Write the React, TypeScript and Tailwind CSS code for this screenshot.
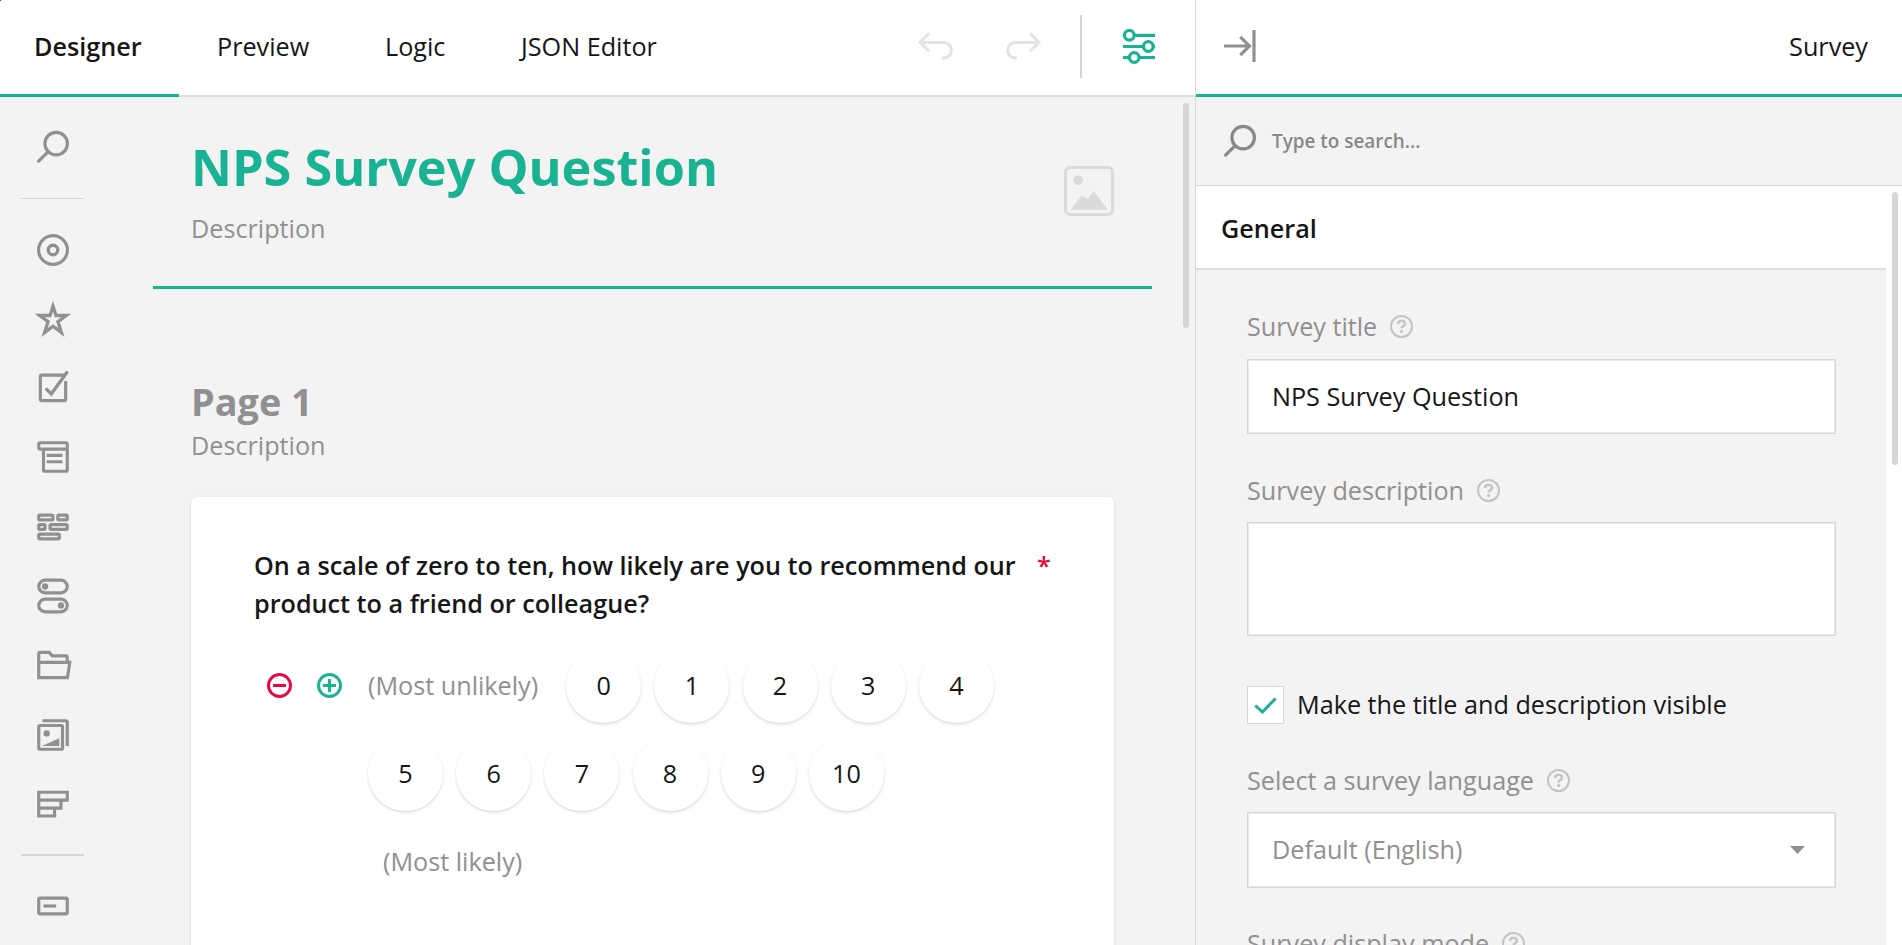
import React from "react";

type IconProps = { className?: string; children: React.ReactNode; box?: string };

function Icon({ className = "", box = "0 0 24 24", children }: IconProps) {
  return (
    <svg viewBox={box} className={"block shrink-0 " + className} fill="none" stroke="currentColor" strokeWidth={2}>
      {children}
    </svg>
  );
}

const searchShape = (
  <>
    <circle cx="14" cy="9.9" r="7.1" strokeWidth={2} />
    <path d="M8.8 15.1L2.9 20.9" strokeLinecap="round" strokeWidth={2} />
  </>
);

const toolbox: { name: string; shape: React.ReactNode; gap: string }[] = [
  {
    name: "radiogroup",
    gap: "mt-[32px]",
    shape: (
      <>
        <circle cx="12" cy="12" r="9.1" />
        <circle cx="12" cy="12" r="3" strokeWidth={2.1} />
      </>
    ),
  },
  {
    name: "rating",
    gap: "mt-[31px]",
    shape: <path d="M12 3.9L13.9 9.8H20.4L15.1 13.6L17.3 20.6L12 16.6L6.7 20.6L8.9 13.6L3.6 9.8H10.1Z" strokeWidth={2.1} strokeMiterlimit={10} />,
  },
  {
    name: "checkbox",
    gap: "mt-[31px]",
    shape: (
      <>
        <path d="M19 3.9H5C4.4 3.9 4 4.3 4 4.9V19C4 19.6 4.4 20 5 20H19C19.6 20 20 19.6 20 19V7.6" />
        <path d="M7.4 12.2L10.9 15.7L21.2 1.6" strokeWidth={2.1} />
      </>
    ),
  },
  {
    name: "dropdown",
    gap: "mt-[31px]",
    shape: (
      <>
        <path d="M4 3H20C20.6 3 21 3.4 21 4V20C21 20.6 20.6 21 20 21H7C6.4 21 6 20.6 6 20V7H4C3.4 7 3 6.6 3 6.2V4C3 3.4 3.4 3 4 3ZM6 7H21" />
        <path d="M8 11H18M8 15H18" />
      </>
    ),
  },
  {
    name: "tagbox",
    gap: "mt-[32px]",
    shape: (
      <g strokeWidth={2}>
        <rect x="3" y="4.5" width="9" height="3" rx="0.7" />
        <rect x="15" y="4.5" width="6" height="3" rx="0.7" />
        <rect x="3" y="10.5" width="4" height="3" rx="0.7" />
        <rect x="10.1" y="10.5" width="10.9" height="3" rx="0.7" />
        <rect x="3" y="16.5" width="13" height="3" rx="0.7" />
      </g>
    ),
  },
  {
    name: "boolean",
    gap: "mt-[31px]",
    shape: (
      <>
        <rect x="3" y="2" width="18" height="8" rx="4" />
        <rect x="3" y="14" width="18" height="8" rx="4" />
        <circle cx="7" cy="6" r="2" fill="currentColor" stroke="none" />
        <circle cx="17" cy="18" r="2" fill="currentColor" stroke="none" />
      </>
    ),
  },
  {
    name: "file",
    gap: "mt-[31px]",
    shape: <path d="M3 11V5C3 4.4 3.4 4 4 4H9.6L11.6 6.2H20C20.6 6.2 21 6.6 21 7.2V10.4M3 10.3H22.6L21.1 20H3V10.3Z" />,
  },
  {
    name: "imagepicker",
    gap: "mt-[32px]",
    shape: (
      <>
        <rect x="3" y="6" width="15" height="15" rx="0.8" />
        <path d="M5.4 3H20C20.6 3 21 3.4 21 4V19" />
        <circle cx="8" cy="11" r="2" fill="currentColor" stroke="none" />
        <path d="M5 19L16 14V19Z" fill="currentColor" stroke="none" />
      </>
    ),
  },
  {
    name: "ranking",
    gap: "mt-[31px]",
    shape: <path d="M3 4.6H21V9.6H3ZM3 9.6H17V14.6H3ZM3 14.6H13V19.6H3Z" />,
  },
];

function Sidebar() {
  return (
    <div className="flex w-[106px] shrink-0 flex-col items-center text-[#909090]">
      <Icon className="mt-[31px] h-[38px] w-[38px]">{searchShape}</Icon>
      <div className="mt-[32px] ml-[21px] h-px w-[63px] self-start bg-[#d6d6d6]" />
      {toolbox.map((t) => (
        <Icon key={t.name} className={"h-[38px] w-[38px] " + t.gap}>
          {t.shape}
        </Icon>
      ))}
      <div className="mt-[31px] ml-[21px] h-[2px] w-[63px] shrink-0 self-start bg-[#d6d6d6]" />
      <Icon className="mt-[31px] h-[38px] w-[38px]">
        <rect x="3" y="7" width="18" height="10" rx="0.9" />
        <path d="M6 12H14" />
      </Icon>
    </div>
  );
}

function Rate({ value }: { value: number }) {
  return (
    <div className="flex h-[75px] w-[75px] items-center justify-center rounded-full bg-white pb-px leading-[38px] text-[#161616] shadow-[0_1.6px_3px_rgba(0,0,0,0.15)]">
      {value}
    </div>
  );
}

function Help() {
  return (
    <Icon box="0 0 23 23" className="h-[23px] w-[23px] text-[#c3c3c3]">
      <circle cx="11.5" cy="11.5" r="10.5" strokeWidth={2} />
      <path d="M8 9C8 7 9.4 5.9 11.5 5.9C13.6 5.9 15 7 15 8.8C15 11 11.6 11 11.6 13.6" strokeWidth={2.4} />
      <circle cx="11.6" cy="16.6" r="1.6" fill="currentColor" stroke="none" />
    </Icon>
  );
}

function Label({ text }: { text: string }) {
  return (
    <div className="flex h-[38px] items-center gap-[13px] leading-[38px] text-[#909090]">
      <span>{text}</span>
      <Help />
    </div>
  );
}

function Designer() {
  return (
    <div className="flex min-w-0 flex-1 flex-col pl-[47px]">
      <div className="flex h-[192px] w-[999px] items-start justify-between border-b-[3px] border-[#19b394] pr-[38px] pl-[38px]">
        <div>
          <h1 className="mt-[36px] text-[50.4px] leading-[68px] font-bold text-[#19b394]">NPS Survey Question</h1>
          <p className="mt-[8px] leading-[38px] text-[#909090]">Description</p>
        </div>
        <Icon box="0 0 50 50" className="mt-[69px] h-[50px] w-[50px] text-[#dadada]">
          <rect x="1.5" y="1.5" width="47" height="47" rx="4.5" strokeWidth={3} />
          <circle cx="14.2" cy="14.3" r="4.8" fill="currentColor" stroke="none" />
          <path d="M6.5 44L17.5 29.8L23.6 33L30 25.5L44 44Z" fill="currentColor" stroke="none" />
        </Icon>
      </div>
      <h2 className="mt-[87px] pl-[38px] text-[37.8px] leading-[52px] font-bold text-[#909090]">Page 1</h2>
      <p className="-mt-[2px] pl-[38px] leading-[38px] text-[#909090]">Description</p>
      <div className="mt-[33px] ml-[38px] h-[448px] w-[923px] shrink-0 rounded-t-[6px] bg-white pl-[63px] shadow-[0_1.6px_3px_rgba(0,0,0,0.15)]">
        <div className="flex pt-[49px] leading-[38px] font-semibold text-[#161616]">
          <div className="w-[783px]">
            On a scale of zero to ten, how likely are you to recommend our
            <br />
            product to a friend or colleague?
          </div>
          <span className="text-[#e60a3e]">*</span>
        </div>
        <div className="mt-[26px] flex">
          <div className="flex h-[75px] w-[114px] items-center gap-[25px] pl-[13px]">
            <Icon box="0 0 25 25" className="h-[25px] w-[25px] text-[#e60a3e]">
              <circle cx="12.5" cy="12.5" r="11" strokeWidth={3} />
              <path d="M6 12.5H19" strokeWidth={3} />
            </Icon>
            <Icon box="0 0 25 25" className="h-[25px] w-[25px] text-[#19b394]">
              <circle cx="12.5" cy="12.5" r="11" strokeWidth={3} />
              <path d="M6 12.5H19M12.5 6V19" strokeWidth={3} />
            </Icon>
          </div>
          <div>
            <div className="flex items-center gap-[13.2px]">
              <span className="w-[185px] pb-[2px] leading-[38px] whitespace-nowrap text-[#909090]">(Most unlikely)</span>
              {[0, 1, 2, 3, 4].map((n) => (
                <Rate key={n} value={n} />
              ))}
            </div>
            <div className="mt-[13px] flex gap-[13.2px]">
              {[5, 6, 7, 8, 9, 10].map((n) => (
                <Rate key={n} value={n} />
              ))}
            </div>
            <div className="mt-[31px] pl-[15px] leading-[38px] text-[#909090]">(Most likely)</div>
          </div>
        </div>
      </div>
    </div>
  );
}

const field = "w-[589px] border border-[#d6d6d6] bg-white shadow-[inset_0_0_0_1px_#e9e9e9]";

function PropertyPanel() {
  return (
    <div className="flex w-[706px] shrink-0 flex-col bg-[#f3f3f3]">
      <div className="flex h-[97px] shrink-0 items-center justify-between border-b-[3px] border-[#19b394] bg-white pr-[34px] pb-[2px] pl-[28px]">
        <Icon box="0 0 32 32" className="h-[32px] w-[32px] text-[#909090]">
          <path d="M0 16H25.5M16.3 6.8L25.5 16L16.3 25.2M30 0V32" strokeWidth={3.2} />
        </Icon>
        <span className="leading-[38px] text-[#161616]">Survey</span>
      </div>
      <div className="flex h-[89px] shrink-0 items-center border-b border-[#d6d6d6] pl-[25px] text-[#888888]">
        <Icon className="h-[38px] w-[38px]">{searchShape}</Icon>
        <span className="ml-[13px] text-[18.9px] leading-[30px] font-semibold">Type to search...</span>
      </div>
      <div className="flex min-h-0 flex-1">
        <div className="flex w-[690px] flex-col">
          <div className="flex h-[84px] shrink-0 items-center border-b-2 border-[#dcdcdc] bg-white pl-[25px] font-semibold text-[#161616]">
            <span className="mt-[2px] leading-[38px]">General</span>
          </div>
          <div className="flex flex-col pt-[37px] pl-[51px]">
            <Label text="Survey title" />
            <div className={"mt-[14px] flex h-[75px] items-center pb-px pl-[24px] leading-[38px] text-[#161616] " + field}>
              NPS Survey Question
            </div>
            <div className="mt-[37px]">
              <Label text="Survey description" />
            </div>
            <div className={"mt-[13px] h-[114px] " + field} />
            <div className="mt-[48px] flex h-[42px] items-center gap-[13px]">
              <div className="flex h-[38px] w-[37px] items-center justify-center border border-[#d6d6d6] bg-white">
                <Icon box="0 0 23 17" className="h-[17px] w-[23px] text-[#19b394]">
                  <path d="M1.3 8.5L8.4 15L21.6 1.5" strokeWidth={3} />
                </Icon>
              </div>
              <span className="pb-[2px] leading-[38px] text-[#161616]">Make the title and description visible</span>
            </div>
            <div className="mt-[35px]">
              <Label text="Select a survey language" />
            </div>
            <div className={"mt-[13px] flex h-[76px] items-center justify-between pr-[30px] pl-[24px] leading-[38px] text-[#909090] " + field}>
              <span className="pb-[2px]">Default (English)</span>
              <Icon box="0 0 15 8" className="h-[8px] w-[15px]">
                <path d="M0 0H15L7.5 8Z" fill="currentColor" stroke="none" />
              </Icon>
            </div>
            <div className="mt-[36px]">
              <Label text="Survey display mode" />
            </div>
          </div>
        </div>
        <div className="flex w-[16px] bg-white pt-[6px] pl-[6px]">
          <div className="h-[273px] w-[6px] rounded-full bg-[#d6d6d6]" />
        </div>
      </div>
    </div>
  );
}

export default function App() {
  return (
    <div className="h-[945px] w-[1902px] overflow-hidden bg-[#333]">
      <div
        className="flex h-full overflow-hidden rounded-tl-[3px] bg-[#f3f3f3] text-[25.2px]"
        style={{ fontFamily: '"Open Sans", sans-serif' }}
      >
        <div className="flex w-[1196px] shrink-0 flex-col border-r border-[#d6d6d6]">
          <div className="flex h-[97px] shrink-0 bg-white text-[#161616]">
            <div className="flex h-full w-[179px] items-center border-b-[3px] border-[#19b394] pb-[2px] pl-[34px] leading-[38px] font-semibold">
              Designer
            </div>
            <div className="flex flex-1 items-center border-b-2 border-[#dcdcdc] pb-[3px] leading-[38px]">
              <span className="ml-[38px] w-[168px]">Preview</span>
              <span className="w-[136px]">Logic</span>
              <span className="flex-1">JSON Editor</span>
              <Icon box="0 0 35 28" className="h-[28px] w-[35px] text-[#e3e3e3]">
                <path d="M2 10.5H25C30 10.5 33.4 13.8 33.4 18.3C33.4 22.7 30 26 25 26H24M11 1.3L2 10.3L11 19.3" strokeWidth={3} />
              </Icon>
              <Icon box="0 0 35 28" className="ml-[53px] h-[28px] w-[35px] text-[#e3e3e3]">
                <path d="M33 10.5H10C5 10.5 1.6 13.8 1.6 18.3C1.6 22.7 5 26 10 26H11M24 1.3L33 10.3L24 19.3" strokeWidth={3} />
              </Icon>
              <div className="mt-px ml-[39px] h-[63px] w-[2px] bg-[#d6d6d6]" />
              <Icon box="0 0 32 35" className="mt-px mr-[40px] ml-[41px] h-[35px] w-[32px] text-[#19b394]">
                <path d="M12 6.3H32M0 17.5H20M30 17.5H32M0 28.5H6M16 28.5H32" strokeWidth={3.2} />
                <circle cx="6.3" cy="6.3" r="4.8" strokeWidth={3.2} />
                <circle cx="25.3" cy="17.5" r="4.8" strokeWidth={3.2} />
                <circle cx="11.2" cy="28.5" r="4.8" strokeWidth={3.2} />
              </Icon>
            </div>
          </div>
          <div className="flex min-h-0 flex-1">
            <Sidebar />
            <Designer />
            <div className="w-[12px] shrink-0 pt-[6px]">
              <div className="h-[225px] w-[6px] rounded-full bg-[#d6d6d6]" />
            </div>
          </div>
        </div>
        <PropertyPanel />
      </div>
    </div>
  );
}
